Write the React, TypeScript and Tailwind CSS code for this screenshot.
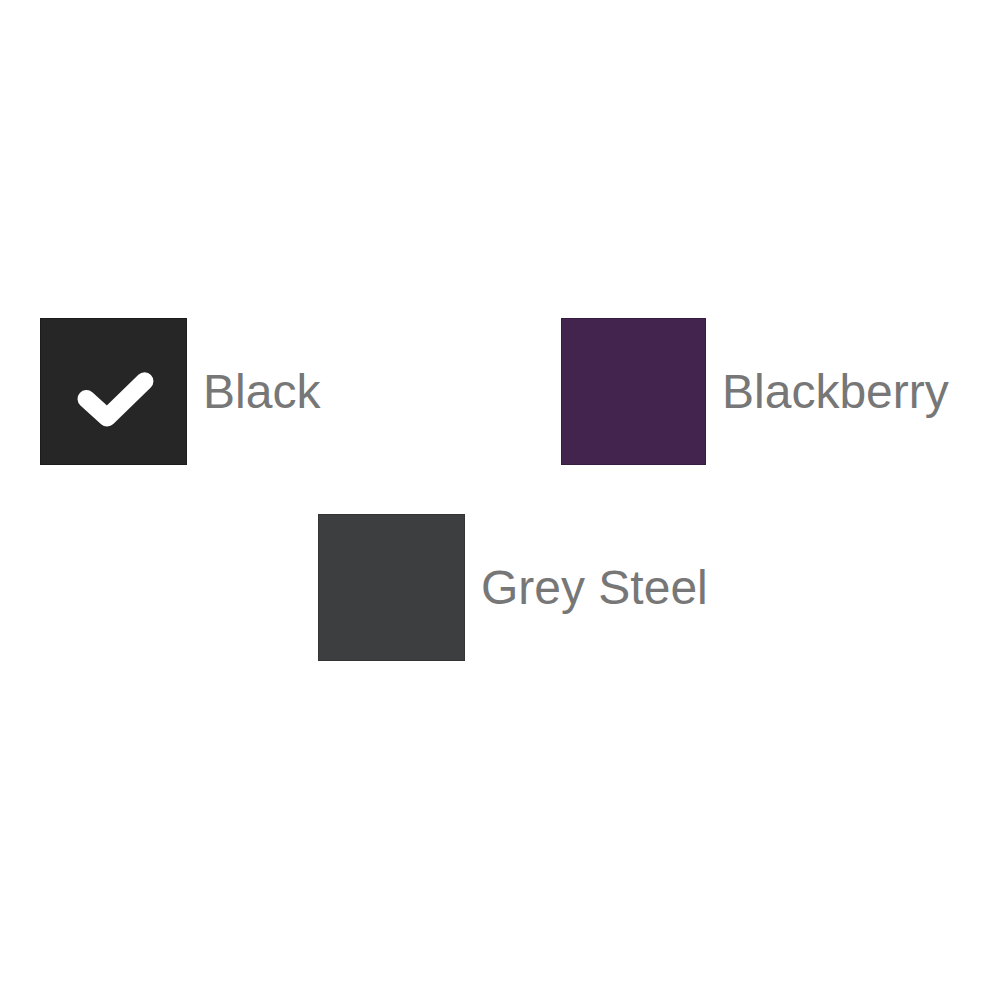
import { useState } from 'react';

type Colour = {
  name: string;
  swatch: string;
};

const colours: Colour[] = [
  { name: 'Black', swatch: 'w-[147px] bg-[#262626] border-[#1c1c1c]' },
  { name: 'Blackberry', swatch: 'w-[145px] bg-[#43244f] border-[#361c40]' },
  { name: 'Grey Steel', swatch: 'w-[147px] bg-[#3d3e40] border-[#333436]' },
];

function Swatch({ colour, selected, onSelect }: { colour: Colour; selected: boolean; onSelect: () => void }) {
  return (
    <button onClick={onSelect} className="flex items-center gap-4 text-left">
      <span className={`flex h-[147px] shrink-0 items-center justify-center border ${colour.swatch}`}>
        {selected && (
          <svg width="147" height="147" viewBox="0 0 147 147">
            <polyline
              points="46,81 67,100 105,63"
              fill="none"
              stroke="#ffffff"
              strokeWidth="18"
              strokeLinecap="round"
              strokeLinejoin="round"
            />
          </svg>
        )}
      </span>
      <span className="font-['Liberation_Sans',Arial,sans-serif] text-[48px] leading-none text-[#777777]">
        {colour.name}
      </span>
    </button>
  );
}

export default function App() {
  const [selected, setSelected] = useState('Black');

  return (
    <div className="flex h-[1000px] w-[1000px] flex-col gap-[49px] bg-white pt-[318px]">
      <div className="flex pl-[40px]">
        <div className="w-[521px]">
          <Swatch colour={colours[0]} selected={selected === colours[0].name} onSelect={() => setSelected(colours[0].name)} />
        </div>
        <Swatch colour={colours[1]} selected={selected === colours[1].name} onSelect={() => setSelected(colours[1].name)} />
      </div>
      <div className="flex pl-[318px]">
        <Swatch colour={colours[2]} selected={selected === colours[2].name} onSelect={() => setSelected(colours[2].name)} />
      </div>
    </div>
  );
}
